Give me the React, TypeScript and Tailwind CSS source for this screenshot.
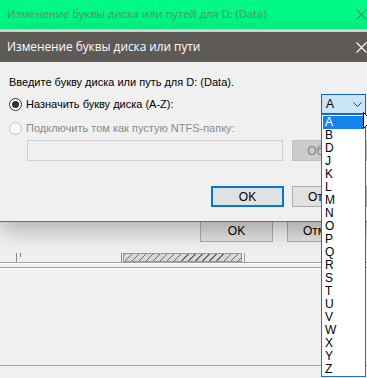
import React from "react";

const letters = ["A", "B", "D", "J", "K", "L", "M", "N", "O", "P", "Q", "R", "S", "T", "U", "V", "W", "X", "Y", "Z"];

function CloseIcon({ color }: { color: string }) {
  return (
    <svg width="11" height="11" viewBox="0 0 11 11">
      <path d="M0.5 0.5 L10.5 10.5 M10.5 0.5 L0.5 10.5" stroke={color} strokeWidth="1.1" fill="none" />
    </svg>
  );
}

function Radio({ checked, disabled }: { checked?: boolean; disabled?: boolean }) {
  return (
    <div
      className={
        "w-[13px] h-[13px] rounded-full border flex items-center justify-center shrink-0 " +
        (disabled ? "border-[#c4c4c4] bg-[#f7f7f7]" : "border-[#333333] bg-white")
      }
    >
      {checked && <div className="w-[7px] h-[7px] rounded-full bg-[#333333]" />}
    </div>
  );
}

export default function App() {
  return (
    <div className="relative w-[367px] h-[378px] overflow-hidden bg-[#f0f0f0] font-['Liberation_Sans',Arial,sans-serif] text-[11px] text-black">
      {/* underlying window */}
      <div className="flex flex-col w-[384px] h-full">
        <div className="h-[29px] shrink-0 bg-[#00f884] flex items-center">
          <span className="flex-1 pl-[7px] font-['Open_Sans',sans-serif] text-[11.2px] text-[#4a9a6c] whitespace-nowrap">
            Изменение буквы диска или путей для D: (Data)
          </span>
          <div className="w-[46px] h-full flex items-center justify-center">
            <CloseIcon color="#4a9a6c" />
          </div>
        </div>
        <div className="h-[190px] shrink-0" />
        <div className="h-[23px] shrink-0 flex text-[12px]">
          <div className="ml-[200px] w-[73px] h-full border border-[#adadad] bg-[#e1e1e1] flex items-center justify-center">
            OK
          </div>
          <div className="ml-[14px] w-[75px] h-full border border-[#adadad] bg-[#e1e1e1] flex items-center justify-center overflow-hidden">
            Отмена
          </div>
        </div>
        <div className="h-[11px] shrink-0" />
        <div className="h-[9px] shrink-0 flex">
          <div className="w-[17px] border-r border-[#8a8a8a]" />
          <div className="w-[105px] border-r border-[#8a8a8a] pl-[3px]">
            <div className="w-px h-[4px] bg-[#7a7a7a]" />
          </div>
          <div className="ml-[1px] w-[119px] border border-[#9a9a9a] bg-[#d8d8d8] bg-[repeating-linear-gradient(135deg,#6a6a6a_0px,#6a6a6a_1px,transparent_1px,transparent_5px)]" />
          <div className="ml-[2px] flex-1 border-l border-[#a0a0a0]" />
        </div>
        <div className="h-px shrink-0 bg-[#a0a0a0]" />
        <div className="h-px shrink-0 bg-white" />
        <div className="h-[3px] shrink-0" />
        <div className="h-px shrink-0 bg-[#a0a0a0]" />
        <div className="h-px shrink-0 bg-white" />
        <div className="h-[96px] shrink-0" />
        <div className="h-px shrink-0 bg-[#a0a0a0]" />
      </div>

      {/* dialog */}
      <div className="absolute left-0 top-[29px] w-[384px] flex flex-col shadow-[0_8px_22px_rgba(0,0,0,0.28)]">
        <div className="h-[3px] bg-[#cfcfcf]" />
        <div className="h-[30px] bg-[#5e5a56] flex items-center">
          <span className="flex-1 pl-[7px] font-['Open_Sans',sans-serif] text-[11.8px] text-white whitespace-nowrap">
            Изменение буквы диска или пути
          </span>
          <div className="w-[46px] h-full flex items-center justify-center">
            <CloseIcon color="#ffffff" />
          </div>
        </div>
        <div className="h-[160px] bg-[#f0f0f0] border-b border-[#6e6e6e] flex flex-col pl-[9px] pt-[13px]">
          <div className="h-[14px] leading-[14px] whitespace-nowrap">Введите букву диска или путь для D: (Data).</div>
          <div className="mt-[5px] h-[20px] flex items-center">
            <Radio checked />
            <span className="ml-[4px] whitespace-nowrap">Назначить букву диска (A-Z):</span>
            <div className="ml-auto mr-[18px] w-[45px] h-[20px] border border-[#0f64b8] bg-[#cce4f7] flex items-center text-[12px]">
              <span className="pl-[4px] flex-1">A</span>
              <svg width="9" height="5" viewBox="0 0 9 5" className="mr-[3px]">
                <path d="M0.5 0.5 L4.5 4.5 L8.5 0.5" stroke="#404040" strokeWidth="1" fill="none" />
              </svg>
            </div>
          </div>
          <div className="mt-[7px] h-[14px] flex items-center">
            <Radio disabled />
            <span className="ml-[4px] whitespace-nowrap text-[#8a8a8a]">Подключить том как пустую NTFS-папку:</span>
          </div>
          <div className="mt-[5px] h-[21px] flex">
            <div className="ml-[18px] w-[256px] h-full border border-[#cfcfcf] bg-[#f0f0f0]" />
            <div className="ml-[9px] w-[75px] h-full border border-[#bfbfbf] bg-[#cccccc] flex items-center justify-center text-[#838383] text-[12px] overflow-hidden">
              Обзор...
            </div>
          </div>
          <div className="mt-[25px] h-[21px] flex text-[12px]">
            <div className="ml-[202px] w-[73px] h-full border-2 border-[#0078d7] bg-[#e1e1e1] flex items-center justify-center">
              OK
            </div>
            <div className="ml-[8px] w-[75px] h-full border border-[#adadad] bg-[#e1e1e1] flex items-center justify-center overflow-hidden">
              Отмена
            </div>
          </div>
        </div>
      </div>

      {/* dropdown list */}
      <div className="absolute left-[321px] top-[114px] w-[45px] h-[263px] border border-[#1a73cc] bg-white p-px text-[12px]">
        {letters.map((l, i) => (
          <div
            key={l}
            className={"h-[13px] leading-[13px] pl-[2px] " + (i === 0 ? "bg-[#1584ea] text-white" : "text-black")}
          >
            {l}
          </div>
        ))}
      </div>

      {/* mouse cursor */}
      <svg className="absolute left-[363px] top-[112px]" width="12" height="19" viewBox="0 0 12 19">
        <path d="M0.5 0.5 L0.5 16.5 L4.5 12.5 L7.5 18.5 L9.5 17.5 L6.5 11.5 L11.5 11.5 Z" fill="white" stroke="black" strokeWidth="1" />
      </svg>
    </div>
  );
}
